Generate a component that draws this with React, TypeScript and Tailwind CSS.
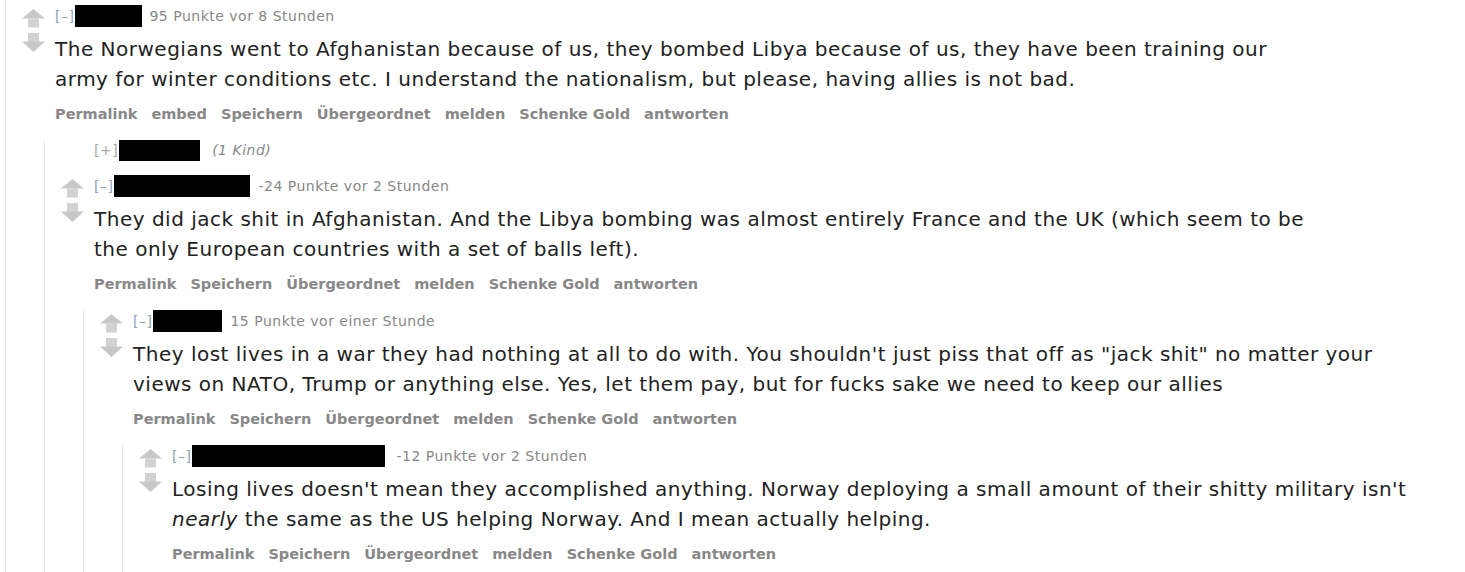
import type React from "react"

interface CommentData {
  boxWidth: number
  metaGap: number
  meta: string
  lines: React.ReactNode[]
  buttons: string[]
}

const FONT = { fontFamily: '"DejaVu Sans", Verdana, sans-serif' }

function Arrows() {
  return (
    <svg width="23" height="44" viewBox="0 0 23 44" className="shrink-0 mt-[4px]">
      <polygon points="11.5,0 23,9.5 0,9.5" fill="#c8c8c8" />
      <rect x="6" y="9.5" width="11" height="9" fill="#d2d2d2" />
      <rect x="6" y="24" width="11" height="9" fill="#d2d2d2" />
      <polygon points="0,32.5 23,32.5 11.5,43" fill="#c8c8c8" />
    </svg>
  )
}

function Buttons({ items }: { items: string[] }) {
  return (
    <div className="flex items-center gap-[14px] h-[20px] mt-[11px] text-[14.5px] font-bold text-[#888]">
      {items.map((b) => (
        <span key={b}>{b}</span>
      ))}
    </div>
  )
}

function Comment({ data, children }: { data: CommentData; children?: React.ReactNode }) {
  return (
    <div>
      <div className="flex">
        <div className="w-[49px] shrink-0 pl-[16px]">
          <Arrows />
        </div>
        <div className="flex-1">
          <div className="flex items-center h-[22px] text-[14px] tracking-[0.5px]">
            <span className="text-[#8fa3b6] mr-[1px]">[–]</span>
            <span className="bg-black h-[22px]" style={{ width: data.boxWidth }} />
            <span className="text-[#888]" style={{ marginLeft: data.metaGap }}>
              {data.meta}
            </span>
          </div>
          <div className="mt-[7px] text-[20px] leading-[30px] tracking-[0.5px] text-[#222]">
            {data.lines.map((l, i) => (
              <div key={i}>{l}</div>
            ))}
          </div>
          <Buttons items={data.buttons} />
        </div>
      </div>
      {children && <div className="ml-[38px] mt-[15px] border-l border-[#e8e8e8]">{children}</div>}
    </div>
  )
}

const full = ["Permalink", "embed", "Speichern", "Übergeordnet", "melden", "Schenke Gold", "antworten"]
const short = ["Permalink", "Speichern", "Übergeordnet", "melden", "Schenke Gold", "antworten"]

export default function App() {
  return (
    <div className="bg-white w-[1465px] h-[572px] overflow-hidden pl-[5px]" style={FONT}>
      <div className="border-l border-[#e8e8e8] pt-[5px] min-h-[600px]">
        <Comment
          data={{
            boxWidth: 67,
            metaGap: 7,
            meta: "95 Punkte vor 8 Stunden",
            lines: [
              "The Norwegians went to Afghanistan because of us, they bombed Libya because of us, they have been training our",
              "army for winter conditions etc. I understand the nationalism, but please, having allies is not bad.",
            ],
            buttons: full,
          }}
        >
          <div className="flex items-center h-[21px] pl-[49px] text-[14px] tracking-[0.5px]">
            <span className="text-[#a8a8a8] mr-[1px]">[+]</span>
            <span className="bg-black h-[21px] w-[81px]" />
            <span className="text-[#888] italic ml-[12px]">(1 Kind)</span>
          </div>
          <div className="mt-[14px]">
            <Comment
              data={{
                boxWidth: 136,
                metaGap: 8,
                meta: "-24 Punkte vor 2 Stunden",
                lines: [
                  "They did jack shit in Afghanistan. And the Libya bombing was almost entirely France and the UK (which seem to be",
                  "the only European countries with a set of balls left).",
                ],
                buttons: short,
              }}
            >
              <div className="min-h-[300px]">
                <Comment
                  data={{
                    boxWidth: 69,
                    metaGap: 8,
                    meta: "15 Punkte vor einer Stunde",
                    lines: [
                      'They lost lives in a war they had nothing at all to do with. You shouldn\'t just piss that off as "jack shit" no matter your',
                      "views on NATO, Trump or anything else. Yes, let them pay, but for fucks sake we need to keep our allies",
                    ],
                    buttons: short,
                  }}
                >
                  <div className="min-h-[200px]">
                    <Comment
                      data={{
                        boxWidth: 193,
                        metaGap: 11,
                        meta: "-12 Punkte vor 2 Stunden",
                        lines: [
                          "Losing lives doesn't mean they accomplished anything. Norway deploying a small amount of their shitty military isn't",
                          <>
                            <em>nearly</em> the same as the US helping Norway. And I mean actually helping.
                          </>,
                        ],
                        buttons: short,
                      }}
                    />
                  </div>
                </Comment>
              </div>
            </Comment>
          </div>
        </Comment>
      </div>
    </div>
  )
}
